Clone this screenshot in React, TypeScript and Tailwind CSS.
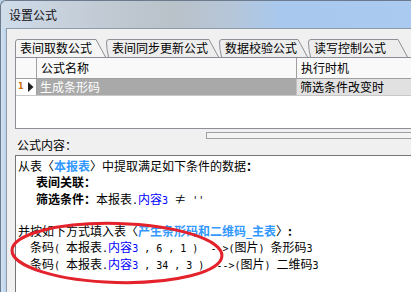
import React from "react";

const L = ({ children }: { children: React.ReactNode }) => (
  <span className="font-['DejaVu_Sans_Mono',monospace] text-[10px] leading-[10px]">{children}</span>
);

function Tab({
  w,
  label,
  selected,
  pl,
}: {
  w: number;
  label: string;
  selected?: boolean;
  pl: string;
}) {
  const d = selected
    ? `M0.5 18 V3 Q0.5 0.5 3 0.5 H${w - 10} L${w - 0.5} 18`
    : `M2.5 18 Q0.5 10 0.5 3 Q0.5 0.5 3 0.5 H${w - 10} L${w - 0.5} 18`;
  return (
    <div className="relative h-[18px] shrink-0" style={{ width: w }}>
      <svg className="absolute left-0 top-0" width={w} height={18}>
        <path d={d} fill={selected ? "#f5f5f5" : "#ededed"} stroke="#8c8f96" strokeWidth="1" />
      </svg>
      <span className={`relative block ${pl} leading-[18px] whitespace-nowrap`}>{label}</span>
    </div>
  );
}

export default function App() {
  return (
    <div className="relative w-[411px] h-[292px] overflow-hidden flex flex-col font-['Noto_Sans_CJK_SC',sans-serif] text-[12px] text-black bg-[#bcd2ea]">
      {/* title bar */}
      <div className="h-[28px] shrink-0 border-t border-l border-[#6b7a8c] rounded-tl-[6px] bg-[linear-gradient(90deg,#cfdcea_0%,#c3ccd6_22%,#b9c1c9_42%,#b6c6d8_56%,#a8c8ee_68%,#aacaf0_100%)] flex items-center pl-[8px]">
        <span className="leading-[14px] text-[#111]">设置公式</span>
      </div>

      <div className="flex flex-1 min-h-0">
        {/* left frame */}
        <div className="w-[6px] shrink-0 border-l border-[#6b7a8c] bg-[linear-gradient(90deg,#d2e2f2,#bcd3ec)]" />

        {/* client */}
        <div className="flex-1 min-w-0 flex flex-col bg-[#f0f0f0] border-t border-l border-[#8e9bab]">
          {/* tabs */}
          <div className="mt-[10px] ml-[8px] flex h-[18px] shrink-0">
            <Tab w={91} label="表间取数公式" selected pl="pl-[5px]" />
            <Tab w={113} label="表间同步更新公式" pl="pl-[6px]" />
            <Tab w={89} label="数据校验公式" pl="pl-[6px]" />
            <Tab w={100} label="读写控制公式" pl="pl-[6px]" />
          </div>

          {/* grid */}
          <div className="ml-[8px] h-[72px] shrink-0 flex flex-col bg-white border-l border-t border-b border-[#8c8f96]">
            <div className="flex h-[21px] shrink-0 bg-[#f9f9f9] border-b border-[#a0a0a0]">
              <div className="w-[21px] shrink-0 border-r border-[#a0a0a0]" />
              <div className="w-[260px] shrink-0 border-r border-[#a0a0a0] pl-[4px] leading-[20px]">公式名称</div>
              <div className="flex-1 pl-[4px] leading-[20px]">执行时机</div>
            </div>
            <div className="flex h-[17px] shrink-0 border-b border-[#c8c8c8]">
              <div className="w-[21px] shrink-0 border-r border-[#a0a0a0] flex items-center">
                <span className="ml-[2px] w-[5px] text-[8px] leading-[8px] font-bold text-[#d07010] font-['DejaVu_Sans',sans-serif]">1</span>
                <svg width="6" height="10" viewBox="0 0 6 10" className="ml-[5px]">
                  <path d="M0 0 L5.5 5 L0 10 Z" fill="#202020" />
                </svg>
              </div>
              <div className="w-[260px] shrink-0 bg-[#a9a9a9] text-white pl-[3px] leading-[16px] border-r border-[#c0c0c0]">生成条形码</div>
              <div className="flex-1 bg-[#e1e1e1] pl-[3px] leading-[16px]">筛选条件改变时</div>
            </div>
            <div className="flex-1" />
          </div>

          {/* splitter strip */}
          <div className="mt-[3px] ml-[199px] h-[7px] shrink-0 border-t border-b border-l border-[#a0a0a0] bg-[#f4f4f4]" />

          {/* label */}
          <div className="ml-[10px] leading-[12px] h-[12px] shrink-0">公式内容：</div>

          {/* memo */}
          <div className="mt-[4px] ml-[8px] flex-1 bg-white border-t border-l border-[#767676] pl-[2px] pt-[2px] leading-[16.25px] whitespace-pre">
            <div className="h-[16.25px]">
              从表〈<b className="text-[#3399ff]">本报表</b>〉中提取满足如下条件的数据<b>：</b>
            </div>
            <div className="h-[16.25px] pl-[18px] font-bold">表间关联：</div>
            <div className="h-[16.25px] pl-[18px]">
              <b>筛选条件：</b>本报表<L>.</L>
              <span className="text-[#0000ff]">
                内容<L>3</L>
              </span>
              <L> </L>≠<L> ''</L>
            </div>
            <div className="h-[16.25px]" />
            <div className="h-[16.25px]">
              并按如下方式填入表〈<b className="text-[#3399ff]">产生条形码和二维码<L>_</L>主表</b>〉<b>:</b>
            </div>
            <div className="h-[16.25px] pl-[12px]">
              条码<L>( </L>本报表<L>.</L>
              <span className="text-[#0000ff]">
                内容<L>3</L>
              </span>
              <L>{" , 6 , 1 )  -->("}</L>图片<L>{") "}</L>条形码<L>3</L>
            </div>
            <div className="h-[16.25px] pl-[12px]">
              条码<L>( </L>本报表<L>.</L>
              <span className="text-[#0000ff]">
                内容<L>3</L>
              </span>
              <L>{" , 34 , 3 )  -->("}</L>图片<L>{") "}</L>二维码<L>3</L>
            </div>
          </div>
        </div>
      </div>

      {/* red hand-drawn ellipse */}
      <svg className="absolute left-0 top-0 pointer-events-none" width="411" height="292">
        <ellipse
          cx="117"
          cy="253"
          rx="105"
          ry="29.5"
          transform="rotate(1.5 117 253)"
          fill="none"
          stroke="#e3222b"
          strokeWidth="3"
        />
      </svg>
    </div>
  );
}
